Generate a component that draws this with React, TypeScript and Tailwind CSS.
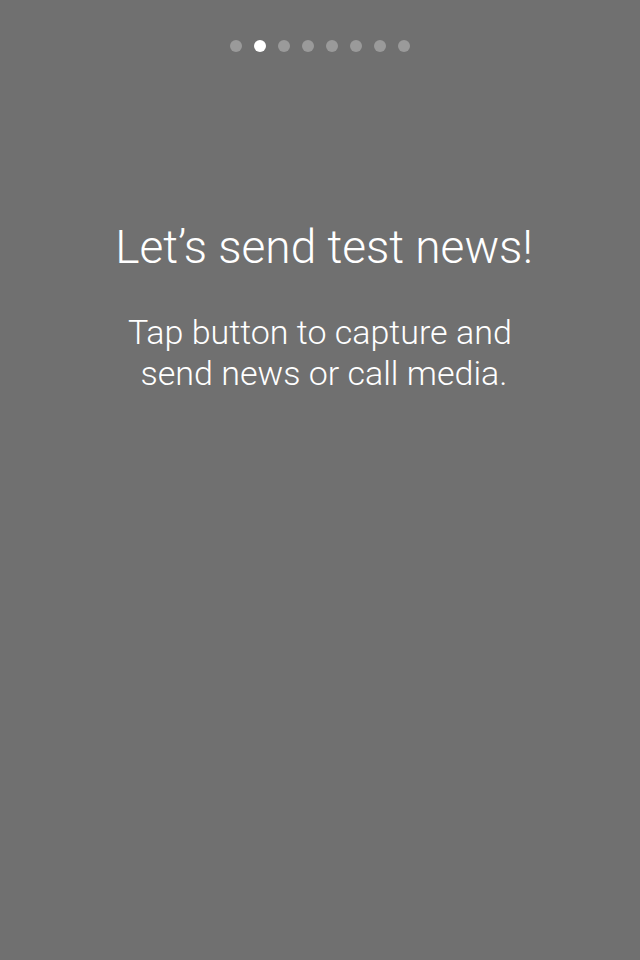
import React from 'react';

const dots = [0, 1, 2, 3, 4, 5, 6, 7];

export default function App() {
  const active = 1;
  return (
    <div className="w-[640px] h-[960px] bg-[#707070] flex flex-col items-center font-['Roboto',sans-serif] font-light text-white">
      <div className="flex gap-[12px] mt-[40px]">
        {dots.map((d) => (
          <span
            key={d}
            className={`w-[12px] h-[12px] rounded-full ${d === active ? 'bg-white' : 'bg-[#9a9a9a]'}`}
          />
        ))}
      </div>
      <div className="flex flex-col items-center pl-[8px]">
        <h1 className="mt-[168px] text-[46px] leading-[54px] text-center">Let’s send test news!</h1>
        <p className="mt-[38px] text-[34px] leading-[41px] text-center">
          Tap button to capture and{'\u00A0'}
          <br />
          send news or call media.
        </p>
      </div>
    </div>
  );
}
